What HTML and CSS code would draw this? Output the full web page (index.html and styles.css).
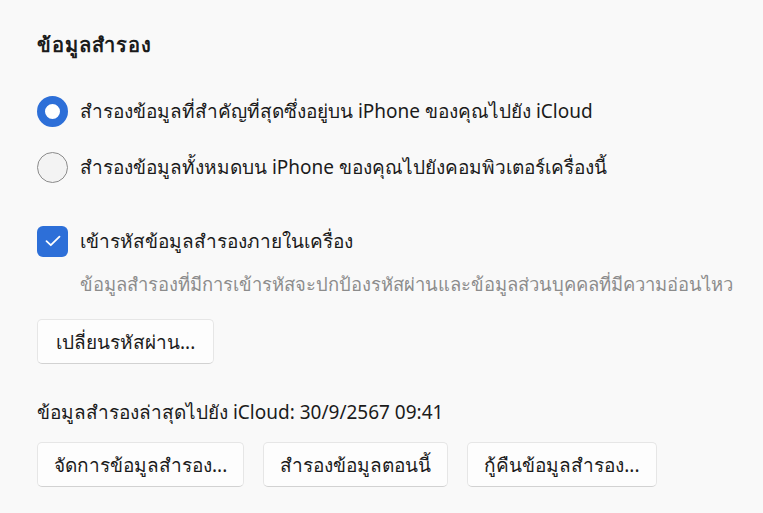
FILE: index.html
```html
<!DOCTYPE html>
<html lang="th">
<head>
    <meta charset="UTF-8">
    <meta name="viewport" content="width=device-width, initial-scale=1.0">
    <title>ข้อมูลสำรอง</title>
    <link rel="stylesheet" href="styles.css">
</head>
<body>
    <div class="panel">
        <h2 class="section-title">ข้อมูลสำรอง</h2>

        <!-- ตัวเลือกปลายทางการสำรอง -->
        <div class="radio-group">
            <label class="option">
                <span class="radio checked"></span>
                <span class="option-text">สำรองข้อมูลที่สำคัญที่สุดซึ่งอยู่บน iPhone ของคุณไปยัง iCloud</span>
            </label>
            <label class="option">
                <span class="radio"></span>
                <span class="option-text">สำรองข้อมูลทั้งหมดบน iPhone ของคุณไปยังคอมพิวเตอร์เครื่องนี้</span>
            </label>
        </div>

        <!-- เข้ารหัส -->
        <label class="option encrypt">
            <span class="checkbox">
                <svg width="16" height="12" viewBox="0 0 16 12"><path d="M1.5 6.2 L5.8 10.2 L14.5 1.6" fill="none" stroke="#fff" stroke-width="1.8" stroke-linecap="round" stroke-linejoin="round"/></svg>
            </span>
            <span class="option-text">เข้ารหัสข้อมูลสำรองภายในเครื่อง</span>
        </label>
        <p class="hint">ข้อมูลสำรองที่มีการเข้ารหัสจะปกป้องรหัสผ่านและข้อมูลส่วนบุคคลที่มีความอ่อนไหว</p>

        <button class="btn change-pass">เปลี่ยนรหัสผ่าน...</button>

        <p class="last-backup">ข้อมูลสำรองล่าสุดไปยัง iCloud: 30/9/2567 09:41</p>

        <div class="actions">
            <button class="btn">จัดการข้อมูลสำรอง...</button>
            <button class="btn">สำรองข้อมูลตอนนี้</button>
            <button class="btn">กู้คืนข้อมูลสำรอง...</button>
        </div>
    </div>
</body>
</html>
```

FILE: styles.css
```css
/* พื้นฐาน */
body {
    margin: 0;
    background-color: #f9f9f9;
    color: #1b1b1b;
    font-family: 'Noto Sans', 'Open Sans', sans-serif;
}

.panel {
    padding: 33px 37px 0 37px;
}

.section-title {
    margin: 0;
    font-size: 20px;
    line-height: 24px;
    font-weight: 700;
    letter-spacing: 1px;
}

/* ตัวเลือก */
.radio-group {
    margin-top: 38px;
    display: flex;
    flex-direction: column;
    gap: 24px;
}

.option {
    display: flex;
    align-items: center;
    gap: 12px;
    height: 32px;
    font-size: 19px;
}

.option-text {
    line-height: 24px;
    white-space: nowrap;
}

.radio {
    box-sizing: border-box;
    width: 31px;
    height: 31px;
    border-radius: 50%;
    border: 1.5px solid #8b8b8b;
    background-color: #f3f3f3;
    flex-shrink: 0;
}

.radio.checked {
    border: 8px solid #2d6fd8;
    background-color: #ffffff;
}

.encrypt {
    margin-top: 42px;
}

.checkbox {
    width: 31px;
    height: 31px;
    border-radius: 6px;
    background-color: #2d6fd8;
    display: flex;
    align-items: center;
    justify-content: center;
    flex-shrink: 0;
}

.hint {
    margin: 15px 0 0 43px;
    font-size: 18.4px;
    line-height: 24px;
    color: #8c8c8c;
    white-space: nowrap;
}

/* ปุ่ม */
.btn {
    height: 45px;
    padding: 0 18px;
    font-family: inherit;
    font-size: 19px;
    color: #1b1b1b;
    background-color: #fdfdfd;
    border: 1px solid #e6e6e6;
    border-bottom-color: #d2d2d2;
    border-radius: 5px;
    white-space: nowrap;
}

.change-pass {
    margin-top: 23px;
}

.last-backup {
    margin: 36px 0 0 0;
    font-size: 19px;
    line-height: 24px;
}

.actions {
    margin-top: 18px;
    display: flex;
    gap: 19px;
}

.actions .btn {
    padding: 0 16px;
}
```
